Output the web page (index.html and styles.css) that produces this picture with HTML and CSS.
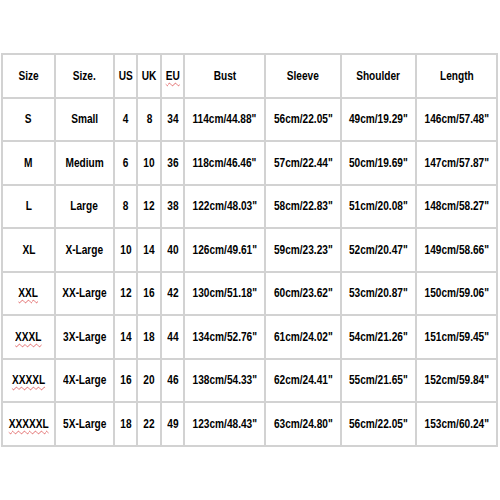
FILE: index.html
```html
<!DOCTYPE html>
<html>
<head>
<meta charset="utf-8">
<link rel="stylesheet" href="styles.css">
</head>
<body>
<div class="chart">
  <div class="c"><span>Size</span></div><div class="c"><span>Size.</span></div><div class="c"><span>US</span></div><div class="c"><span>UK</span></div><div class="c"><span class="sp">EU</span></div><div class="c"><span>Bust</span></div><div class="c"><span>Sleeve</span></div><div class="c"><span>Shoulder</span></div><div class="c"><span>Length</span></div>

  <div class="c"><span>S</span></div><div class="c"><span>Small</span></div><div class="c"><span>4</span></div><div class="c"><span>8</span></div><div class="c"><span>34</span></div><div class="c"><span>114cm/44.88"</span></div><div class="c"><span>56cm/22.05"</span></div><div class="c"><span>49cm/19.29"</span></div><div class="c"><span>146cm/57.48"</span></div>

  <div class="c"><span>M</span></div><div class="c"><span>Medium</span></div><div class="c"><span>6</span></div><div class="c"><span>10</span></div><div class="c"><span>36</span></div><div class="c"><span>118cm/46.46"</span></div><div class="c"><span>57cm/22.44"</span></div><div class="c"><span>50cm/19.69"</span></div><div class="c"><span>147cm/57.87"</span></div>

  <div class="c"><span>L</span></div><div class="c"><span>Large</span></div><div class="c"><span>8</span></div><div class="c"><span>12</span></div><div class="c"><span>38</span></div><div class="c"><span>122cm/48.03"</span></div><div class="c"><span>58cm/22.83"</span></div><div class="c"><span>51cm/20.08"</span></div><div class="c"><span>148cm/58.27"</span></div>

  <div class="c"><span>XL</span></div><div class="c"><span>X-Large</span></div><div class="c"><span>10</span></div><div class="c"><span>14</span></div><div class="c"><span>40</span></div><div class="c"><span>126cm/49.61"</span></div><div class="c"><span>59cm/23.23"</span></div><div class="c"><span>52cm/20.47"</span></div><div class="c"><span>149cm/58.66"</span></div>

  <div class="c"><span class="sp">XXL</span></div><div class="c"><span>XX-Large</span></div><div class="c"><span>12</span></div><div class="c"><span>16</span></div><div class="c"><span>42</span></div><div class="c"><span>130cm/51.18"</span></div><div class="c"><span>60cm/23.62"</span></div><div class="c"><span>53cm/20.87"</span></div><div class="c"><span>150cm/59.06"</span></div>

  <div class="c"><span class="sp">XXXL</span></div><div class="c"><span>3X-Large</span></div><div class="c"><span>14</span></div><div class="c"><span>18</span></div><div class="c"><span>44</span></div><div class="c"><span>134cm/52.76"</span></div><div class="c"><span>61cm/24.02"</span></div><div class="c"><span>54cm/21.26"</span></div><div class="c"><span>151cm/59.45"</span></div>

  <div class="c"><span class="sp">XXXXL</span></div><div class="c"><span>4X-Large</span></div><div class="c"><span>16</span></div><div class="c"><span>20</span></div><div class="c"><span>46</span></div><div class="c"><span>138cm/54.33"</span></div><div class="c"><span>62cm/24.41"</span></div><div class="c"><span>55cm/21.65"</span></div><div class="c"><span>152cm/59.84"</span></div>

  <div class="c"><span class="sp">XXXXXL</span></div><div class="c"><span>5X-Large</span></div><div class="c"><span>18</span></div><div class="c"><span>22</span></div><div class="c"><span>49</span></div><div class="c"><span>123cm/48.43"</span></div><div class="c"><span>63cm/24.80"</span></div><div class="c"><span>56cm/22.05"</span></div><div class="c"><span>153cm/60.24"</span></div>
</div>
</body>
</html>
```

FILE: styles.css
```css
html, body {
  margin: 0;
  padding: 0;
  background: #ffffff;
}
body {
  font-family: "Liberation Sans", Arial, sans-serif;
  font-weight: bold;
  font-size: 12.5px;
  color: #000000;
}
.chart {
  display: grid;
  grid-template-columns: 53px 59px 23px 24px 23px 81px 76px 75px 81px;
  grid-template-rows: repeat(9, 43.5px);
  margin: 53px 0 0 1px;
  width: 495px;
  border-top: 2px solid #d2d2d2;
  border-left: 2px solid #d2d2d2;
}
.c {
  box-sizing: border-box;
  border-right: 2px solid #d2d2d2;
  border-bottom: 2px solid #d2d2d2;
  display: flex;
  align-items: center;
  justify-content: center;
  white-space: nowrap;
  overflow: visible;
}
.c span {
  display: inline-block;
  transform: scaleX(0.81);
  line-height: 14px;
}
.c .sp {
  text-decoration: underline wavy #e06060;
  text-decoration-thickness: 1px;
  text-underline-offset: 2px;
}
```
